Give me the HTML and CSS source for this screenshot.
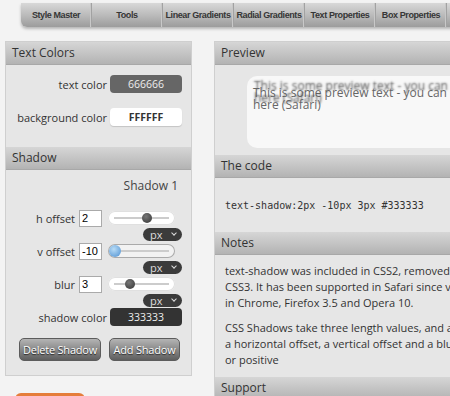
FILE: index.html
```html
<!DOCTYPE html>
<html lang="en">
<head>
    <meta charset="UTF-8">
    <title>Text Shadow - Style Master</title>
    <link rel="stylesheet" href="styles.css">
</head>
<body>
    <div class="pagina">
        <ul class="menu">
            <li>Style Master</li>
            <li>Tools</li>
            <li>Linear Gradients</li>
            <li>Radial Gradients</li>
            <li>Text Properties</li>
            <li>Box Properties</li>
            <li>Borders</li>
        </ul>

        <div class="conteudo">
            <div class="lateral">
                <div class="painel">
                    <h3>Text Colors</h3>
                    <div class="corpo cores">
                        <div class="linha">
                            <label>text color</label>
                            <span class="cor cor-texto">666666</span>
                        </div>
                        <div class="linha">
                            <label>background color</label>
                            <span class="cor cor-fundo">FFFFFF</span>
                        </div>
                    </div>
                    <h3>Shadow</h3>
                    <div class="corpo sombra">
                        <div class="titulo-sombra">Shadow 1</div>

                        <div class="linha">
                            <label>h offset</label>
                            <input class="numero" type="text" value="2">
                            <div class="slider"><span class="knob" style="left: 34px"></span></div>
                        </div>
                        <div class="unidade"><span class="select">px</span></div>

                        <div class="linha">
                            <label>v offset</label>
                            <input class="numero" type="text" value="-10">
                            <div class="slider ativo"><span class="knob" style="left: 1px"></span></div>
                        </div>
                        <div class="unidade"><span class="select">px</span></div>

                        <div class="linha">
                            <label>blur</label>
                            <input class="numero" type="text" value="3">
                            <div class="slider"><span class="knob" style="left: 17px"></span></div>
                        </div>
                        <div class="unidade"><span class="select">px</span></div>

                        <div class="linha">
                            <label>shadow color</label>
                            <span class="cor cor-sombra">333333</span>
                        </div>

                        <div class="botoes">
                            <button class="botao">Delete Shadow</button>
                            <button class="botao">Add Shadow</button>
                        </div>
                    </div>
                </div>
                <div class="laranja"></div>
            </div>

            <div class="principal painel">
                <h3>Preview</h3>
                <div class="corpo corpo-preview">
                    <div class="preview">This is some preview text - you can paste your own text in<br>here (Safari)</div>
                </div>
                <h3>The code</h3>
                <div class="corpo codigo">text-shadow:2px -10px 3px #333333</div>
                <h3>Notes</h3>
                <div class="corpo notas">
                    <p>text-shadow was included in CSS2, removed from CSS2.1 and is back in<br>CSS3. It has been supported in Safari since version 1, and is supported<br>in Chrome, Firefox 3.5 and Opera 10.</p>
                    <p>CSS Shadows take three length values, and a color. These values are<br>a horizontal offset, a vertical offset and a blur. Offsets can be negative<br>or positive</p>
                </div>
                <h3>Support</h3>
                <div class="corpo"></div>
            </div>
        </div>
    </div>
</body>
</html>
```

FILE: styles.css
```css
body {
    margin: 0;
    background-color: #f3f3f3;
    font-family: "Open Sans", "DejaVu Sans", sans-serif;
    color: #333;
    overflow: hidden;
}
.pagina {
    width: 720px;
    padding-top: 3px;
}
.menu {
    display: flex;
    list-style: none;
    margin: 0 0 14px 21px;
    padding: 0;
    height: 24px;
    border-radius: 0 0 0 6px;
    background: linear-gradient(#d8d8d8, #b8b8b8 55%, #9c9c9c);
    box-shadow: 0 2px 3px rgba(0, 0, 0, 0.25);
}
.menu li {
    width: 71px;
    line-height: 24px;
    text-align: center;
    font-family: "Liberation Sans", Arial, sans-serif;
    font-size: 9px;
    font-weight: bold;
    letter-spacing: -0.4px;
    color: #363636;
    border-right: 1px solid #a2a2a2;
    box-shadow: inset -1px 0 0 #c8c8c8;
    box-sizing: border-box;
    white-space: nowrap;
}
.conteudo {
    display: flex;
    gap: 22px;
    padding-left: 5px;
}
.lateral {
    width: 187px;
}
.painel {
    border: 1px solid #cfcfcf;
    background-color: #e6e6e6;
}
.painel h3 {
    margin: 0;
    height: 22px;
    line-height: 22px;
    padding-left: 6px;
    font-size: 12px;
    font-weight: normal;
    color: #333;
    background: linear-gradient(#d6d6d6, #b3b3b3);
    border-bottom: 1px solid #a8a8a8;
}
.corpo {
    padding: 11px 9px;
}
.cores {
    padding-top: 10px;
    padding-bottom: 21px;
}
.linha {
    display: flex;
    align-items: center;
    justify-content: flex-end;
    gap: 3px;
    height: 18px;
    font-size: 11px;
    color: #333;
}
.cores .linha + .linha {
    margin-top: 15px;
}
.cor {
    display: inline-block;
    width: 72px;
    height: 18px;
    line-height: 18px;
    border-radius: 4px;
    text-align: center;
    font-size: 10.5px;
}
.cor-texto {
    background-color: #666;
    color: #eee;
}
.cor-fundo {
    background-color: #fff;
    color: #333;
    font-weight: bold;
    box-shadow: 0 1px 1px rgba(0, 0, 0, 0.15);
}
.cor-sombra {
    background-color: #333;
    color: #eee;
}
.sombra {
    padding-top: 8px;
    padding-bottom: 14px;
}
.titulo-sombra {
    text-align: right;
    font-size: 12px;
    line-height: 16px;
    color: #444;
    padding-right: 4px;
    margin-bottom: 15px;
}
.numero {
    width: 23px;
    height: 17px;
    box-sizing: border-box;
    border: 1px solid #aaa;
    padding: 0 2px;
    font-family: "Liberation Sans", sans-serif;
    font-size: 11px;
    margin: 0 3px 0 1px;
}
.slider {
    position: relative;
    width: 67px;
    height: 14px;
    margin-right: 7px;
    border-radius: 7px;
    background-color: #fff;
    box-shadow: inset 0 0 0 1px #e0e0e0;
}
.slider.ativo {
    background-color: #f2f2f2;
    box-shadow: inset 0 0 0 1px #aaa;
}
.slider::before {
    content: "";
    position: absolute;
    left: 6px;
    right: 6px;
    top: 6px;
    height: 2px;
    background-color: #ccc;
}
.knob {
    position: absolute;
    top: 2px;
    width: 10px;
    height: 10px;
    border-radius: 50%;
    background: radial-gradient(circle at 40% 35%, #777, #333);
}
.ativo .knob {
    top: 1px;
    width: 12px;
    height: 12px;
    background: radial-gradient(circle at 40% 35%, #b8dcf6, #4d8fd1);
}
.unidade {
    display: flex;
    justify-content: flex-end;
    margin: 1px 0;
}
.select {
    position: relative;
    width: 39px;
    height: 13px;
    line-height: 13px;
    border-radius: 7px;
    background-color: #3b3b3b;
    color: #ddd;
    font-size: 11px;
    padding-left: 7px;
    box-sizing: border-box;
}
.select::after {
    content: "";
    position: absolute;
    right: 6px;
    top: 3px;
    width: 3px;
    height: 3px;
    border-right: 1.5px solid #ddd;
    border-bottom: 1.5px solid #ddd;
    transform: rotate(45deg);
}
.botoes {
    display: flex;
    justify-content: space-between;
    margin-top: 12px;
    padding: 0 2px 0 4px;
}
.botao {
    height: 23px;
    padding: 0;
    border: 1px solid #5c5c5c;
    border-radius: 5px;
    background: linear-gradient(#b4b4b4, #8a8a8a 50%, #5e5e5e);
    color: #fff;
    font-family: "Open Sans", sans-serif;
    font-size: 11px;
    letter-spacing: -0.2px;
    white-space: nowrap;
    text-shadow: 0 1px 1px #222;
}
.botao:first-child {
    width: 82px;
}
.botao:last-child {
    width: 71px;
}
.laranja {
    width: 70px;
    height: 20px;
    margin: 17px 0 0 10px;
    border-radius: 6px 6px 0 0;
    background-color: #e57d3a;
}
.principal {
    width: 440px;
}
.corpo-preview {
    padding: 11px 9px 7px;
}
.preview {
    margin-left: 23px;
    height: 72px;
    padding: 11px 6px;
    box-sizing: border-box;
    border-radius: 10px;
    background-color: #f8f8f8;
    font-size: 12px;
    line-height: 12px;
    color: #666;
    white-space: nowrap;
    text-shadow: 1px -7px 2px #555;
}
.codigo {
    padding: 21px 10px 20px;
    font-family: "DejaVu Sans Mono", monospace;
    font-size: 10px;
    line-height: 13px;
}
.notas {
    padding: 8px 10px 0;
    font-size: 11px;
    line-height: 16px;
    white-space: nowrap;
}
.notas p {
    margin: 0 0 9px;
}
```
